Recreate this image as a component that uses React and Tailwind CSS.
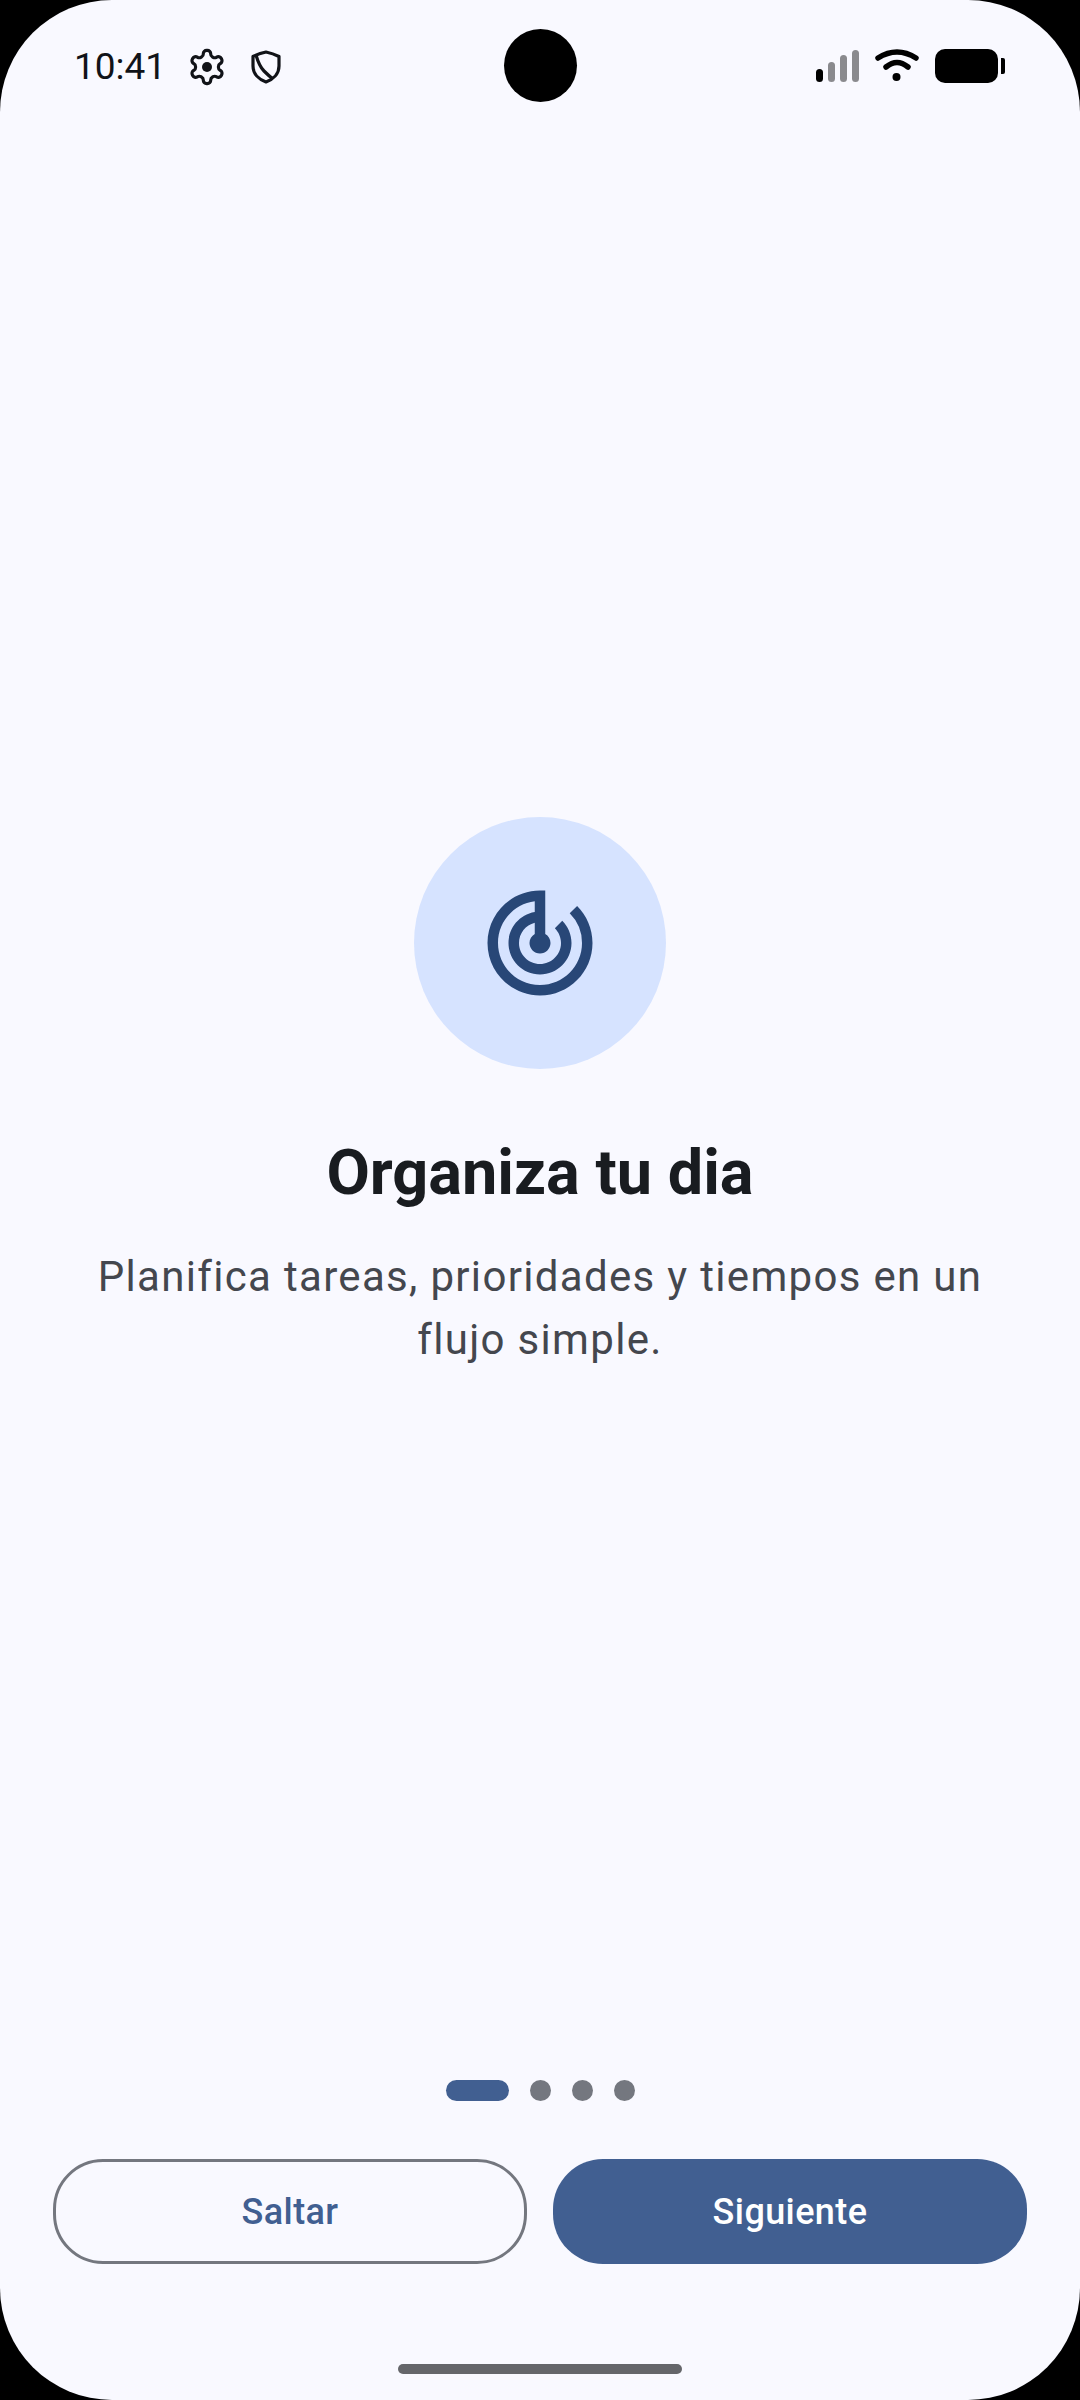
import React from 'react';
import { MdTrackChanges } from 'react-icons/md';

const StatusBar = () => (
  <div className="relative flex h-[100px] shrink-0 items-start justify-between pl-[74px] pr-[75px] pt-[49px]">
    <div className="-mt-[2px] flex items-center">
      <span className="font-['Roboto',sans-serif] text-[37px] leading-[36px] text-[#111318]">10:41</span>
      {/* gear with filled center */}
      <svg viewBox="0 0 24 24" className="ml-[21px] h-[40px] w-[40px]" fill="none" stroke="#111318" strokeWidth="1.9" strokeLinejoin="round">
        <path d="M12.22 2h-.44a2 2 0 0 0-2 2v.18a2 2 0 0 1-1 1.73l-.43.25a2 2 0 0 1-2 0l-.15-.08a2 2 0 0 0-2.73.73l-.22.38a2 2 0 0 0 .73 2.73l.15.1a2 2 0 0 1 1 1.72v.51a2 2 0 0 1-1 1.74l-.15.09a2 2 0 0 0-.73 2.73l.22.38a2 2 0 0 0 2.73.73l.15-.08a2 2 0 0 1 2 0l.43.25a2 2 0 0 1 1 1.73V20a2 2 0 0 0 2 2h.44a2 2 0 0 0 2-2v-.18a2 2 0 0 1 1-1.73l.43-.25a2 2 0 0 1 2 0l.15.08a2 2 0 0 0 2.73-.73l.22-.39a2 2 0 0 0-.73-2.73l-.15-.08a2 2 0 0 1-1-1.74v-.5a2 2 0 0 1 1-1.74l.15-.09a2 2 0 0 0 .73-2.73l-.22-.38a2 2 0 0 0-2.73-.73l-.15.08a2 2 0 0 1-2 0l-.43-.25a2 2 0 0 1-1-1.73V4a2 2 0 0 0-2-2z" />
        <circle cx="12" cy="12" r="3" fill="#111318" stroke="none" />
      </svg>
      <svg viewBox="0 0 30 34" className="ml-[24px] h-[34px] w-[30px]" fill="none" stroke="#111318" strokeWidth="3.2">
        <path d="M15 2 Q22 3.5 28 6.5 V16 C28 24 22 29.5 15 32 C8 29.5 2 24 2 16 V6.5 Q8 3.5 15 2 Z" strokeLinejoin="round" />
        <path d="M5 5 C7 12 9 17 13 21 C15 23 18 26 22 29" />
      </svg>
    </div>
    <div className="flex items-start">
      {/* signal */}
      <div className="flex h-[33px] items-end gap-[5px]">
        <div className="h-[13px] w-[7px] rounded-full bg-black"></div>
        <div className="h-[20px] w-[7px] rounded-full bg-[#8a8a8e]"></div>
        <div className="h-[27px] w-[7px] rounded-full bg-[#8a8a8e]"></div>
        <div className="h-[32px] w-[7px] rounded-full bg-[#8a8a8e]"></div>
      </div>
      {/* wifi */}
      <svg viewBox="0 0 44 34" className="ml-[16px] h-[34px] w-[44px]" fill="none" stroke="#000" strokeWidth="5.5" strokeLinecap="round">
        <path d="M3 9 Q22 -3 41 9" />
        <path d="M11 18 Q22 9 33 18" />
        <circle cx="21.5" cy="28" r="4" fill="#000" stroke="none" />
      </svg>
      {/* battery */}
      <div className="ml-[16px] flex items-center">
        <div className="h-[34px] w-[63px] rounded-[10px] bg-black"></div>
        <div className="ml-[3px] h-[16px] w-[4px] rounded-r-[2px] bg-black"></div>
      </div>
    </div>
    {/* camera cutout */}
    <div className="absolute left-[504px] top-[29px] h-[73px] w-[73px] rounded-full bg-black"></div>
  </div>
);

const App = () => {
  return (
    <div className="h-[2400px] w-[1080px] bg-black">
      <div className="flex h-full flex-col overflow-hidden rounded-[112px] bg-[#F9F9FF]">
        <StatusBar />
        <div className="flex flex-1 flex-col items-center px-[54px] pt-[717px]">
          <div className="flex h-[252px] w-[252px] items-center justify-center rounded-full bg-[#D6E3FF]">
            <MdTrackChanges className="h-[126px] w-[126px] text-[#284777]" />
          </div>
          <h1 className="mt-[68px] font-['Roboto',sans-serif] text-[63px] font-bold leading-[72px] text-[#191C20]">Organiza tu dia</h1>
          <p className="mt-[36px] text-center font-['Roboto',sans-serif] text-[42px] leading-[63px] tracking-[1.32px] text-[#44474E]">
            Planifica tareas, prioridades y tiempos en un flujo simple.
          </p>
        </div>
        <div className="flex items-center justify-center gap-[21px]">
          <div className="h-[21px] w-[63px] rounded-full bg-[#415F91]"></div>
          <div className="h-[21px] w-[21px] rounded-full bg-[#74777F]"></div>
          <div className="h-[21px] w-[21px] rounded-full bg-[#74777F]"></div>
          <div className="h-[21px] w-[21px] rounded-full bg-[#74777F]"></div>
        </div>
        <div className="mt-[58px] grid grid-cols-2 gap-[26px] px-[53px]">
          <button className="h-[105px] rounded-[50px] border-[3px] border-[#74777F] font-['Roboto',sans-serif] text-[36px] font-medium tracking-[0.4px] text-[#415F91]">Saltar</button>
          <button className="h-[105px] rounded-[50px] bg-[#415F91] font-['Roboto',sans-serif] text-[36px] font-medium tracking-[0.4px] text-white">Siguiente</button>
        </div>
        <div className="flex h-[136px] items-end justify-center pb-[26px]">
          <div className="h-[10px] w-[284px] rounded-full bg-[#65666A]"></div>
        </div>
      </div>
    </div>
  );
};

export default App;
